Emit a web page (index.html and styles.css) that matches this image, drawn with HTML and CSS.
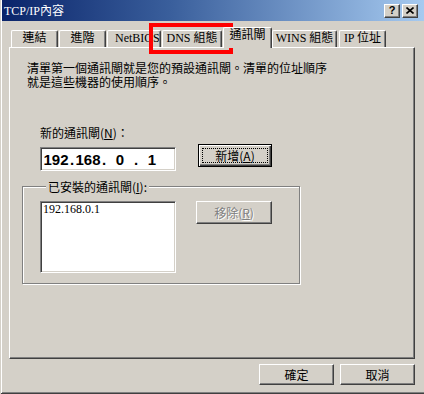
FILE: index.html
```html
<!DOCTYPE html>
<html lang="zh-Hant">

<head>
    <meta charset="UTF-8">
    <title>TCP/IP內容</title>
    <link rel="stylesheet" href="styles.css">
</head>

<body>
    <div class="window">
        <div class="titlebar">
            <span class="title">TCP/IP內容</span>
            <span class="tbtn help">?</span>
            <span class="tbtn close">
                <svg width="8" height="7" viewBox="0 0 8 7"><path d="M0.5 0.5L7.5 6.5M7.5 0.5L0.5 6.5" stroke="#000" stroke-width="1.6" /></svg>
            </span>
        </div>

        <div class="tabs">
            <div class="tab t1">連結</div>
            <div class="tab t2">進階</div>
            <div class="tab t3">NetBIOS</div>
            <div class="tab t4">DNS 組態</div>
            <div class="tab sel">通訊閘</div>
            <div class="tab t6">WINS 組態</div>
            <div class="tab t7">IP 位址</div>
        </div>

        <div class="panel">
            <p class="intro">清單第一個通訊閘就是您的預設通訊閘。清單的位址順序<br>就是這些機器的使用順序。</p>
            <div class="label">新的通訊閘(<u>N</u>)：</div>
            <div class="row">
                <div class="ipbox">
                    <span class="field">192</span><span class="dot">.</span>
                    <span class="field">168</span><span class="dot">.</span>
                    <span class="field">0</span><span class="dot">.</span>
                    <span class="field">1</span>
                </div>
                <div class="btn default add"><span class="focus">新增(<u>A</u>)</span></div>
            </div>

            <fieldset class="group">
                <legend>已安裝的通訊閘(<u>I</u>):</legend>
                <div class="grow">
                    <div class="listbox">192.168.0.1</div>
                    <div class="btn disabled remove">移除(<u>R</u>)</div>
                </div>
            </fieldset>
        </div>

        <div class="footer">
            <div class="btn">確定</div>
            <div class="btn">取消</div>
        </div>

        <div class="mark"></div>
    </div>
</body>

</html>
```

FILE: styles.css
```css
* {
    margin: 0;
    padding: 0;
    box-sizing: border-box;
}

body {
    font-family: "Noto Sans CJK TC", "Liberation Sans", sans-serif;
    font-size: 12px;
    color: #000;
    background: #d4d0c8;
}

.window {
    position: relative;
    width: 424px;
    height: 394px;
    background: #d4d0c8;
    box-shadow: inset 1px 0 0 #d4d0c8, inset 0 -1px 0 #404040, inset 2px 0 0 #fff, inset 0 -2px 0 #808080;
    overflow: hidden;
}

/* title bar */
.titlebar {
    display: flex;
    align-items: center;
    height: 21px;
    margin-left: 2px;
    padding: 0 6px 0 2px;
    background: linear-gradient(to right, #0a246a, #3a5f9c 40%, #a6caf0);
}

.title {
    flex: 1;
    color: #fff;
    font-family: "Liberation Serif", "Noto Sans CJK TC", serif;
    font-size: 12px;
    line-height: 14px;
}

.tbtn {
    display: flex;
    align-items: center;
    justify-content: center;
    width: 16px;
    height: 14px;
    margin-left: 2px;
    background: #d4d0c8;
    border: 1px solid;
    border-color: #fff #404040 #404040 #fff;
    box-shadow: inset -1px -1px 0 #808080;
    font-family: "Liberation Sans", sans-serif;
    font-weight: bold;
    font-size: 11px;
    line-height: 11px;
}

/* tabs */
.tabs {
    display: flex;
    align-items: flex-end;
    height: 20px;
    margin-top: 6px;
    padding-left: 11px;
}

.tab {
    height: 17px;
    margin-right: 1px;
    background: #d4d0c8;
    border-top: 1px solid #fff;
    border-left: 1px solid #fff;
    border-right: 1px solid #404040;
    border-radius: 2px 2px 0 0;
    box-shadow: inset -1px 0 0 #808080;
    font-family: "Liberation Serif", "Noto Sans CJK TC", serif;
    line-height: 15px;
    text-align: center;
    white-space: nowrap;
    overflow: hidden;
}

.t1,
.t2,
.t7 {
    width: 47px;
}

.t3 {
    width: 54px;
    text-align: left;
    padding-left: 7px;
}

.t4 {
    width: 60px;
}

.t6 {
    width: 65px;
    margin-right: 2px;
}

.tab.sel {
    position: relative;
    z-index: 1;
    width: 49px;
    height: 21px;
    margin-right: 0;
    margin-bottom: -1px;
    line-height: 15px;
}

/* panel */
.panel {
    width: 406px;
    height: 312px;
    margin-left: 9px;
    border: 1px solid;
    border-color: #fff #404040 #404040 #fff;
    box-shadow: inset -1px -1px 0 #808080;
}

.intro {
    margin: 13px 0 0 17px;
    line-height: 14px;
}

.label {
    margin: 37px 0 0 30px;
    line-height: 13px;
}

.row {
    display: flex;
    align-items: flex-start;
    margin: 5px 0 0 30px;
}

.ipbox,
.listbox {
    background: #fff;
    border: 1px solid;
    border-color: #808080 #fff #fff #808080;
    box-shadow: inset 1px 1px 0 #404040, inset -1px -1px 0 #d4d0c8;
}

.ipbox {
    display: flex;
    align-items: center;
    width: 136px;
    height: 24px;
    margin-top: 3px;
    padding-left: 2px;
    font-family: "Liberation Sans", sans-serif;
    font-weight: bold;
    font-size: 15px;
}

.field {
    width: 26px;
    text-align: center;
}

.dot {
    width: 6px;
    text-align: center;
}

.btn {
    display: flex;
    align-items: center;
    justify-content: center;
    width: 75px;
    height: 21px;
    background: #d4d0c8;
    border: 1px solid;
    border-color: #fff #404040 #404040 #fff;
    box-shadow: inset -1px -1px 0 #808080;
    line-height: 13px;
}

.btn.default {
    width: 74px;
    height: 23px;
    margin-left: 22px;
    padding: 3px;
    border-color: #000;
    box-shadow: inset 1px 1px 0 #fff, inset -1px -1px 0 #404040, inset -2px -2px 0 #808080;
}

.focus {
    display: flex;
    align-items: center;
    justify-content: center;
    width: 100%;
    height: 100%;
    border: 1px dotted #000;
}

.btn.disabled {
    color: #808080;
    text-shadow: 1px 1px 0 #fff;
}

.remove {
    width: 76px;
    height: 23px;
    margin-left: 20px;
}

/* group box */
.group {
    width: 278px;
    margin: 9px 0 0 12px;
    padding: 0 0 10px 17px;
    border: 1px solid #808080;
    box-shadow: 1px 1px 0 #fff, inset 1px 1px 0 #fff;
}

.group legend {
    margin-left: 6px;
    padding: 0 2px;
    background: #d4d0c8;
    line-height: 13px;
}

.grow {
    display: flex;
    align-items: flex-start;
    margin-top: 8px;
}

.listbox {
    width: 136px;
    height: 72px;
    padding: 1px 2px;
    font-family: "Liberation Serif", serif;
    line-height: 13px;
}

/* bottom buttons */
.footer {
    display: flex;
    justify-content: flex-end;
    gap: 6px;
    margin-top: 5px;
    padding-right: 9px;
}

/* red highlight drawn over the dns tab */
.mark {
    position: absolute;
    left: 149px;
    top: 23px;
    width: 84px;
    height: 31px;
    border: 4px solid #f00;
}
```
